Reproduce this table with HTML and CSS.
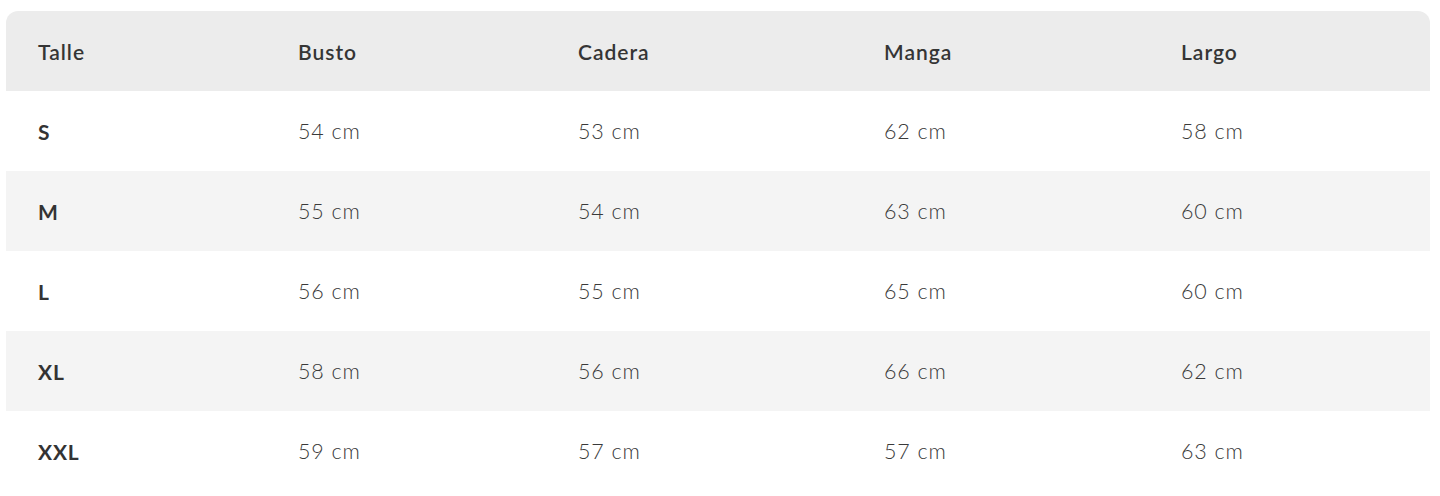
FILE: index.html
```html
<!DOCTYPE html>
<html lang="es">
<head>
<meta charset="utf-8">
<link rel="stylesheet" href="styles.css">
</head>
<body>
<div class="wrap">
<table class="sizes">
  <colgroup>
    <col class="c1"><col class="c2"><col class="c3"><col class="c4"><col class="c5">
  </colgroup>
  <thead>
    <tr><th>Talle</th><th>Busto</th><th>Cadera</th><th>Manga</th><th>Largo</th></tr>
  </thead>
  <tbody>
    <tr><th>S</th><td>54 cm</td><td>53 cm</td><td>62 cm</td><td>58 cm</td></tr>
    <tr><th>M</th><td>55 cm</td><td>54 cm</td><td>63 cm</td><td>60 cm</td></tr>
    <tr><th>L</th><td>56 cm</td><td>55 cm</td><td>65 cm</td><td>60 cm</td></tr>
    <tr><th>XL</th><td>58 cm</td><td>56 cm</td><td>66 cm</td><td>62 cm</td></tr>
    <tr><th>XXL</th><td>59 cm</td><td>57 cm</td><td>57 cm</td><td>63 cm</td></tr>
  </tbody>
</table>
</div>
</body>
</html>
```
FILE: styles.css
```css
html, body { margin: 0; padding: 0; background: #fff; }
body { font-family: "Lato", "Open Sans", sans-serif; color: #333; }
.wrap { padding: 11px 10px 0 6px; }
.sizes {
  width: 1424px;
  border-collapse: separate;
  border-spacing: 0;
  table-layout: fixed;
  border-radius: 12px;
  overflow: hidden;
}
.c1 { width: 260px; }
.c2 { width: 280px; }
.c3 { width: 306px; }
.c4 { width: 297px; }
.c5 { width: 281px; }
.sizes th, .sizes td {
  height: 80px;
  padding: 0 0 0 32px;
  text-align: left;
  vertical-align: middle;
  font-size: 21px;
  box-sizing: border-box;
}
.sizes thead tr { background: #ececec; }
.sizes thead th { font-weight: 600; color: #353535; letter-spacing: 1px; }
.sizes tbody th { font-weight: 700; color: #333; letter-spacing: 0.8px; }
.sizes tbody td { font-weight: 300; font-size: 21.5px; color: #3a3a3a; letter-spacing: 0.9px; }
.sizes tbody tr:nth-child(even) { background: #f4f4f4; }
```
